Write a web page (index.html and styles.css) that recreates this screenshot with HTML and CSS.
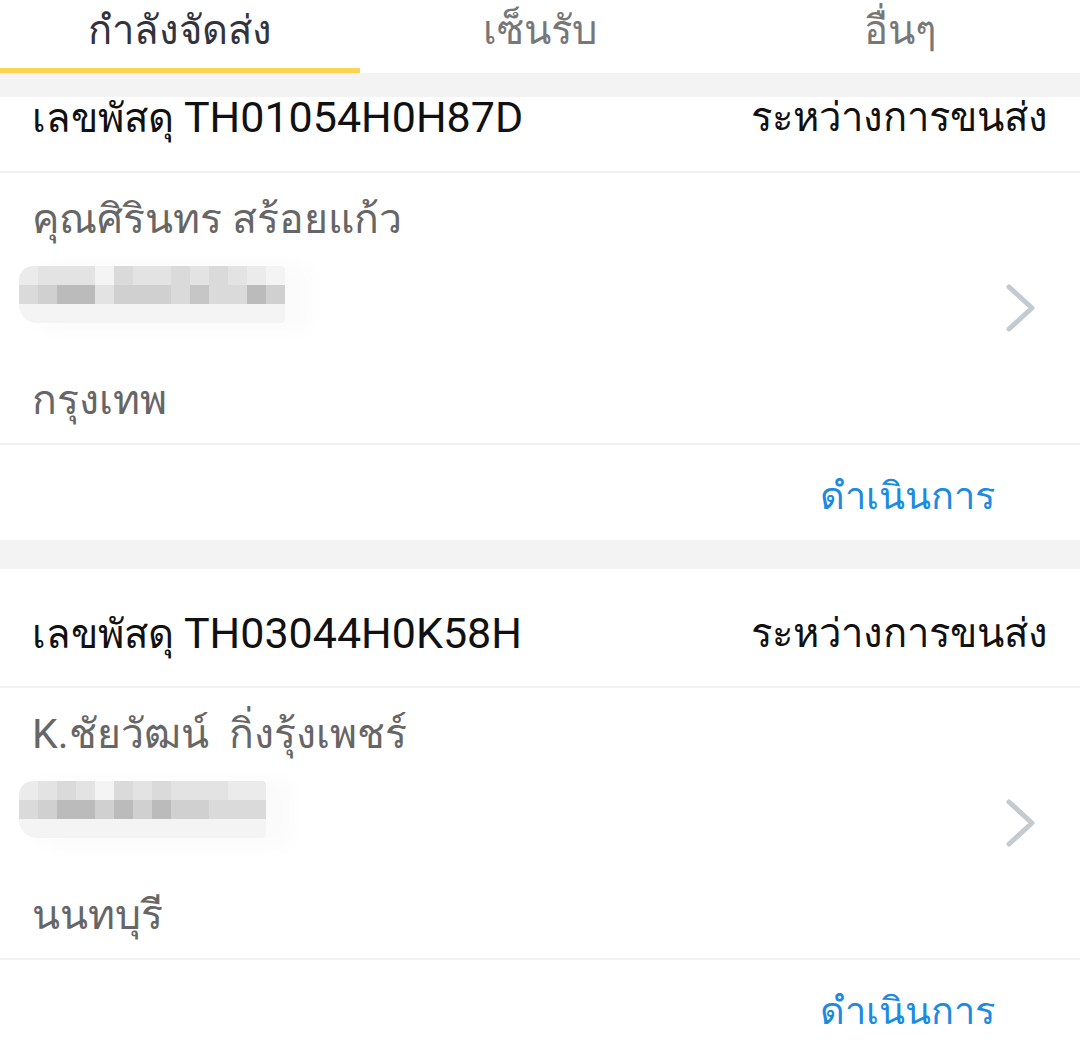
FILE: index.html
```html
<!DOCTYPE html>
<html>
<head>
    <title>พัสดุของฉัน</title>
    <link rel="stylesheet" href="styles.css">
</head>
<body>
    <div class="tabs">
        <div class="tab active">กำลังจัดส่ง</div>
        <div class="tab">เซ็นรับ</div>
        <div class="tab">อื่นๆ</div>
    </div>
    <div class="tabs-gap"></div>

    <div class="list">
        <div class="parcel cut-top">
            <div class="parcel-head">
                <span class="parcel-no">เลขพัสดุ <span class="code">TH01054H0H87D</span></span>
                <span class="parcel-status">ระหว่างการขนส่ง</span>
            </div>
            <div class="parcel-body">
                <div class="receiver">
                    <div class="name">คุณศิรินทร สร้อยแก้ว</div>
                    <div class="address-blur">
                        <div class="blur-row">
                            <i class="s1"></i><i class="s2"></i><i class="s2"></i><i class="s2"></i><i class="s0"></i><i class="s3"></i><i class="s2"></i><i class="s2"></i><i class="s3"></i><i class="s2"></i><i class="s3"></i><i class="s2"></i><i class="s1"></i><i class="s0"></i>
                        </div>
                        <div class="blur-row">
                            <i class="s3"></i><i class="s4"></i><i class="s6"></i><i class="s6"></i><i class="s2"></i><i class="s4"></i><i class="s4"></i><i class="s4"></i><i class="s3"></i><i class="s5"></i><i class="s3"></i><i class="s3"></i><i class="s6"></i><i class="s4"></i>
                        </div>
                        <div class="blur-row">
                            <i class="s0"></i><i class="s0"></i><i class="s0"></i><i class="s0"></i><i class="s0"></i><i class="s0"></i><i class="s0"></i><i class="s0"></i><i class="s0"></i><i class="s0"></i><i class="s0"></i><i class="s0"></i><i class="s0"></i><i class="s0"></i>
                        </div>
                    </div>
                    <div class="city">กรุงเทพ</div>
                </div>
                <svg class="chevron" width="32" height="50" viewBox="0 0 32 50">
                    <polyline points="5,4 28,25 5,46" />
                </svg>
            </div>
            <div class="parcel-foot">
                <a class="action" href="#">ดำเนินการ</a>
            </div>
        </div>

        <div class="parcel">
            <div class="parcel-head">
                <span class="parcel-no">เลขพัสดุ <span class="code">TH03044H0K58H</span></span>
                <span class="parcel-status">ระหว่างการขนส่ง</span>
            </div>
            <div class="parcel-body">
                <div class="receiver">
                    <div class="name">K.ชัยวัฒน์ &nbsp;กิ่งรุ้งเพชร์</div>
                    <div class="address-blur">
                        <div class="blur-row">
                            <i class="s1"></i><i class="s2"></i><i class="s3"></i><i class="s2"></i><i class="s0"></i><i class="s3"></i><i class="s2"></i><i class="s3"></i><i class="s2"></i><i class="s2"></i><i class="s2"></i><i class="s1"></i><i class="s1"></i>
                        </div>
                        <div class="blur-row">
                            <i class="s3"></i><i class="s4"></i><i class="s6"></i><i class="s6"></i><i class="s4"></i><i class="s6"></i><i class="s4"></i><i class="s6"></i><i class="s4"></i><i class="s4"></i><i class="s3"></i><i class="s3"></i><i class="s3"></i>
                        </div>
                        <div class="blur-row">
                            <i class="s0"></i><i class="s0"></i><i class="s0"></i><i class="s0"></i><i class="s0"></i><i class="s0"></i><i class="s0"></i><i class="s0"></i><i class="s0"></i><i class="s0"></i><i class="s0"></i><i class="s0"></i><i class="s0"></i>
                        </div>
                    </div>
                    <div class="city">นนทบุรี</div>
                </div>
                <svg class="chevron" width="32" height="50" viewBox="0 0 32 50">
                    <polyline points="5,4 28,25 5,46" />
                </svg>
            </div>
            <div class="parcel-foot">
                <a class="action" href="#">ดำเนินการ</a>
            </div>
        </div>
    </div>
</body>
</html>
```
FILE: styles.css
```css
body {
    margin: 0;
    font-family: Roboto, "Noto Sans", sans-serif;
    background-color: #f3f3f3;
}

/* tab bar */
.tabs {
    display: flex;
    height: 73px;
    background-color: #ffffff;
}

.tab {
    flex: 1;
    display: flex;
    align-items: center;
    justify-content: center;
    padding-bottom: 8px;
    border-bottom: 5px solid transparent;
    font-size: 40px;
    color: #777777;
}

.tab.active {
    color: #33333d;
    border-bottom-color: #fdd34f;
}

.tabs-gap {
    height: 24px;
    background-color: #f3f3f3;
}

.list {
    display: flex;
    flex-direction: column;
    gap: 29px;
    background-color: #f3f3f3;
}

.parcel {
    background-color: #ffffff;
}

.parcel-head {
    display: flex;
    justify-content: space-between;
    align-items: center;
    height: 119px;
    padding: 12px 32px 0 32px;
    box-sizing: border-box;
    border-bottom: 2px solid #f2f2f2;
    font-size: 40px;
    line-height: 50px;
    color: #111111;
}

/* first card is scrolled under the tabs, only the bottom of its header shows */
.cut-top .parcel-head {
    height: 76px;
    padding: 0 32px 32px 32px;
    line-height: 42px;
}

.parcel-head .code {
    font-size: 43px;
}

.parcel-body {
    display: flex;
    align-items: center;
    height: 270px;
    padding: 0 44px 0 0;
    border-bottom: 2px solid #f2f2f2;
}

.receiver {
    flex: 1;
}

.name, .city {
    padding-left: 32px;
    font-size: 41px;
    line-height: 58px;
    color: #666666;
}

.name {
    margin-top: 2px;
}

.city {
    margin-top: 44px;
}

/* pixelated address */
.address-blur {
    display: inline-block;
    margin: 18px 0 0 19px;
    border-radius: 14px 4px 4px 18px;
    box-shadow: 20px 4px 22px 6px #fbfbfb;
    overflow: hidden;
}

.blur-row {
    display: flex;
}

.blur-row i {
    display: block;
    width: 19px;
    height: 19px;
}

.s0 { background-color: #f4f4f4; }
.s1 { background-color: #ebebeb; }
.s2 { background-color: #e3e3e3; }
.s3 { background-color: #dadada; }
.s4 { background-color: #d0d0d0; }
.s5 { background-color: #c6c6c6; }
.s6 { background-color: #bbbbbb; }

.chevron polyline {
    fill: none;
    stroke: #c3cbd1;
    stroke-width: 5;
    stroke-linecap: round;
    stroke-linejoin: round;
}

.parcel-foot {
    display: flex;
    justify-content: flex-end;
    align-items: center;
    height: 95px;
    padding: 6px 85px 0 0;
    box-sizing: border-box;
}

.action {
    font-size: 38px;
    color: #1c8ae0;
    text-decoration: none;
}
```
